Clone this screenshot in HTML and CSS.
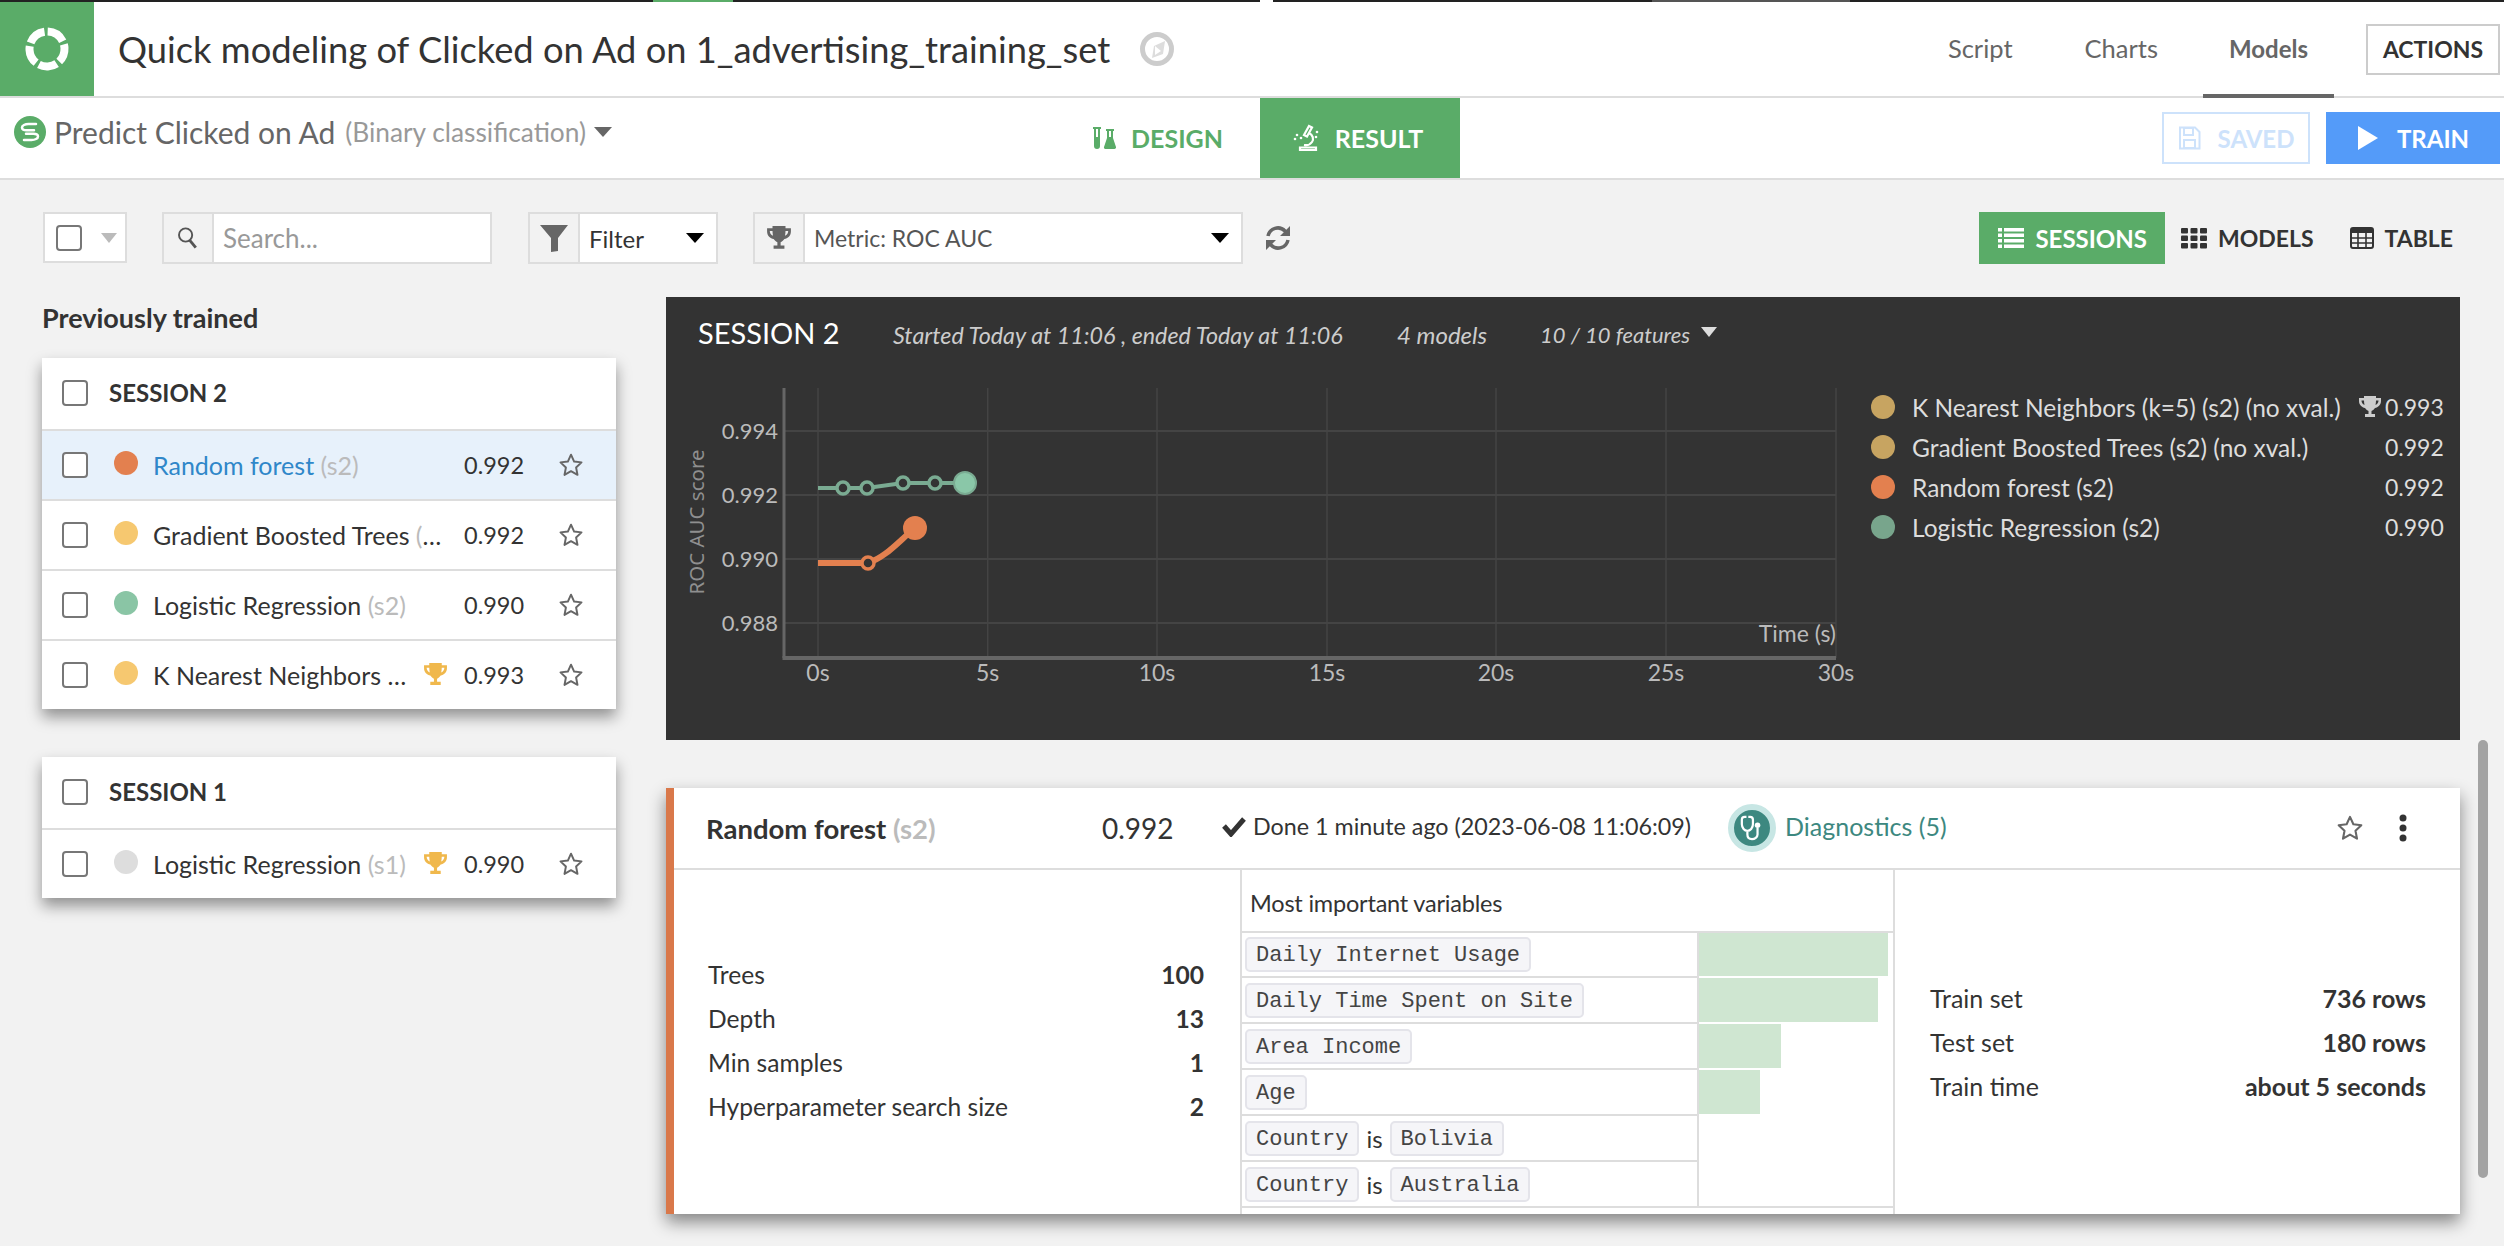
FILE: index.html
```html
<!DOCTYPE html>
<html lang="en">
<head>
    <meta charset="UTF-8">
    <title>Quick modeling of Clicked on Ad</title>
    <link rel="stylesheet" href="styles.css">
</head>
<body>
    <!-- Shared icons -->
    <svg class="sprite" width="0" height="0">
        <symbol id="star" viewBox="0 0 24 24"><path d="M12 2.500l2.900 6.300 6.800.8-5 4.700 1.300 6.800-6-3.400-6 3.400 1.300-6.800-5-4.700 6.800-.8z" fill="none" stroke="currentColor" stroke-width="1.800" stroke-linejoin="round"/></symbol>
        <symbol id="trophy" viewBox="0 0 24 24"><path d="M6 1h12v2h5v3c0 4-3 6.500-6 7-1 1.500-2.500 2.500-3.500 3v3H17v3H7v-3h3.500v-3c-1-.5-2.500-1.500-3.500-3-3-.5-6-3-6-7V3h5zM3.500 5.500c0 2 1.200 3.700 3 4.500-.3-1.400-.5-3-.5-4.500zm17 0H18c0 1.500-.2 3.100-.5 4.500 1.800-.8 3-2.500 3-4.500z" fill="currentColor"/></symbol>
    </svg>

    <div class="load-line">
        <span class="load-dark load-a"></span>
        <span class="load-green"></span>
        <span class="load-dark load-b"></span>
        <span class="load-white"></span>
        <span class="load-dark load-c"></span>
        <span class="load-grey"></span>
        <span class="load-dark load-d"></span>
    </div>

    <header class="top-bar">
        <div class="logo">
            <svg width="46" height="46" viewBox="0 0 46 46"><circle cx="23" cy="23" r="17.500" fill="none" stroke="#fff" stroke-width="8" pathLength="100" stroke-dasharray="17 3" stroke-dashoffset="-1.500" transform="rotate(-93 23 23)"/></svg>
        </div>
        <h1 class="page-title">Quick modeling of Clicked on Ad on 1_advertising_training_set</h1>
        <svg class="compass" width="36" height="36" viewBox="0 0 36 36"><circle cx="18" cy="18" r="14.500" fill="none" stroke="#ccc" stroke-width="5"/><path d="M26 10l-2 13-11 4 2-12z" fill="#ddd"/><path d="M16 15v9l6-4z" fill="#fff"/></svg>
        <nav class="top-tabs">
            <a class="top-tab">Script</a>
            <a class="top-tab">Charts</a>
            <a class="top-tab active">Models</a>
        </nav>
        <button class="actions-btn">ACTIONS</button>
    </header>

    <div class="sub-bar">
        <div class="task-name">
            <svg width="32" height="32" viewBox="0 0 32 32"><circle cx="16" cy="16" r="16" fill="#5aac68"/><path d="M22 8h-7.500c-3.500 0-6.500 1.500-6.500 3.500s2 2.800 4.500 2.800H20M10 24h7.500c3.500 0 6.500-1.500 6.500-3.500s-2-2.800-4.500-2.800H12" fill="none" stroke="#fff" stroke-width="2.500" stroke-linecap="round"/></svg>
            <span class="task-title">Predict Clicked on Ad</span>
            <span class="task-type">(Binary classification)</span>
            <span class="caret task-caret"></span>
        </div>
        <div class="mode-tabs">
            <a class="mode-tab">
                <svg width="24" height="24" viewBox="0 0 24 24"><path d="M1 1h8v2H8v17a3 3 0 0 1-6 0V3H1zM4 3v8h2V3z" fill="currentColor" fill-rule="evenodd"/><path d="M14 3h8v2h-1v7l3 9c.3 1-.5 2-1.500 2h-9c-1 0-1.800-1-1.500-2l3-9V5h-1zM17 5v6h2V5z" fill="currentColor" fill-rule="evenodd"/></svg>
                DESIGN
            </a>
            <a class="mode-tab active">
                <svg width="28" height="28" viewBox="0 0 28 28"><path d="M8 26h16v-2.500H8zM17 2l3 1.500-5 9-3-1.500zM17 9c4 2 5 6 3 9-2 3-5 3.500-8 3" fill="none" stroke="#fff" stroke-width="2.200"/><circle cx="5" cy="11" r="1.300" fill="#fff"/><circle cx="3" cy="15" r="1.300" fill="#fff"/><circle cx="9" cy="14" r="1.300" fill="#fff"/><circle cx="25" cy="8" r="1.300" fill="#fff"/><circle cx="24" cy="13" r="1.300" fill="#fff"/></svg>
                RESULT
            </a>
        </div>
        <div class="train-btns">
            <button class="saved-btn">
                <svg width="23" height="24" viewBox="0 0 23 24"><path d="M2 1.500h15l4.500 4.500v16.500H2z" fill="none" stroke="currentColor" stroke-width="2"/><path d="M6 2h9v7H6zM6 14h11v8H6z" fill="none" stroke="currentColor" stroke-width="2"/></svg>
                SAVED
            </button>
            <button class="train-btn">
                <svg width="22" height="24" viewBox="0 0 22 24"><path d="M1 0l20 12L1 24z" fill="#fff"/></svg>
                TRAIN
            </button>
        </div>
    </div>

    <div class="toolbar">
        <div class="check-drop">
            <span class="checkbox"></span>
            <span class="caret caret-pale"></span>
        </div>
        <div class="input-group search-group">
            <span class="group-icon">
                <svg width="24" height="24" viewBox="0 0 20 20"><circle cx="8" cy="7.500" r="5.500" fill="none" stroke="#555" stroke-width="1.600"/><path d="M11.500 12l5 6" stroke="#555" stroke-width="2.400"/></svg>
            </span>
            <span class="group-value placeholder">Search...</span>
        </div>
        <div class="input-group filter-group">
            <span class="group-icon">
                <svg width="30" height="30" viewBox="0 0 30 30"><path d="M1 2h28L19 15v13l-7 1V15z" fill="#666"/></svg>
            </span>
            <span class="group-value">Filter</span>
            <span class="caret caret-black"></span>
        </div>
        <div class="input-group metric-group">
            <span class="group-icon">
                <svg class="trophy-grey" width="26" height="26"><use href="#trophy"/></svg>
            </span>
            <span class="group-value metric-value">Metric: ROC AUC</span>
            <span class="caret caret-black"></span>
        </div>
        <svg class="refresh" width="28" height="28" viewBox="0 0 28 28"><path d="M4 12a10 10 0 0 1 17-5l3 3M24 16a10 10 0 0 1-17 5l-3-3" fill="none" stroke="#666" stroke-width="3.500"/><path d="M26 2v10H16zM2 26V16h10z" fill="#666"/></svg>
        <div class="view-switch">
            <a class="view-btn active">
                <svg width="26" height="22" viewBox="0 0 26 22"><path d="M0 1h4v3.500H0zM6 1h20v3.500H6zM0 6.500h4V10H0zM6 6.500h20V10H6zM0 12h4v3.500H0zM6 12h20v3.500H6zM0 17.500h4V21H0zM6 17.500h20V21H6z" fill="#fff"/></svg>
                SESSIONS
            </a>
            <a class="view-btn models-btn">
                <svg width="26" height="22" viewBox="0 0 26 22"><g fill="#333"><rect x="0" y="1" width="7" height="5.500" rx="1"/><rect x="9.500" y="1" width="7" height="5.500" rx="1"/><rect x="19" y="1" width="7" height="5.500" rx="1"/><rect x="0" y="8.500" width="7" height="5.500" rx="1"/><rect x="9.500" y="8.500" width="7" height="5.500" rx="1"/><rect x="19" y="8.500" width="7" height="5.500" rx="1"/><rect x="0" y="16" width="7" height="5.500" rx="1"/><rect x="9.500" y="16" width="7" height="5.500" rx="1"/><rect x="19" y="16" width="7" height="5.500" rx="1"/></g></svg>
                MODELS
            </a>
            <a class="view-btn">
                <svg width="24" height="22" viewBox="0 0 24 22"><rect x="1" y="1" width="22" height="20" rx="2" fill="none" stroke="#333" stroke-width="2"/><path d="M1 2h22v4H1z" fill="#333"/><path d="M8 6v15M16 6v15M1 11h22M1 16h22" stroke="#333" stroke-width="1.600"/></svg>
                TABLE
            </a>
        </div>
    </div>

    <main class="main">
        <aside class="sidebar">
            <h2 class="side-title">Previously trained</h2>

            <section class="session-card">
                <div class="session-head"><span class="checkbox"></span>SESSION 2</div>
                <div class="model-row selected">
                    <span class="checkbox"></span>
                    <span class="dot dot-orange"></span>
                    <span class="model-name">Random forest <em>(s2)</em></span>
                    <span class="model-score">0.992</span>
                    <svg class="star" width="26" height="26"><use href="#star"/></svg>
                </div>
                <div class="model-row">
                    <span class="checkbox"></span>
                    <span class="dot dot-yellow"></span>
                    <span class="model-name">Gradient Boosted Trees <em>(</em>…</span>
                    <span class="model-score">0.992</span>
                    <svg class="star" width="26" height="26"><use href="#star"/></svg>
                </div>
                <div class="model-row">
                    <span class="checkbox"></span>
                    <span class="dot dot-green"></span>
                    <span class="model-name">Logistic Regression <em>(s2)</em></span>
                    <span class="model-score">0.990</span>
                    <svg class="star" width="26" height="26"><use href="#star"/></svg>
                </div>
                <div class="model-row">
                    <span class="checkbox"></span>
                    <span class="dot dot-yellow"></span>
                    <span class="model-name">K Nearest Neighbors …</span>
                    <svg class="trophy-gold" width="25" height="25"><use href="#trophy"/></svg>
                    <span class="model-score">0.993</span>
                    <svg class="star" width="26" height="26"><use href="#star"/></svg>
                </div>
            </section>

            <section class="session-card">
                <div class="session-head"><span class="checkbox"></span>SESSION 1</div>
                <div class="model-row">
                    <span class="checkbox"></span>
                    <span class="dot dot-grey"></span>
                    <span class="model-name">Logistic Regression <em>(s1)</em></span>
                    <svg class="trophy-gold" width="25" height="25"><use href="#trophy"/></svg>
                    <span class="model-score">0.990</span>
                    <svg class="star" width="26" height="26"><use href="#star"/></svg>
                </div>
            </section>
        </aside>

        <div class="results">
            <section class="chart-panel">
                <div class="chart-head">
                    <span class="chart-title">SESSION 2</span>
                    <span class="chart-meta meta-time">Started Today at 11:06 , ended Today at 11:06</span>
                    <span class="chart-meta meta-models">4 models</span>
                    <span class="chart-meta meta-features">10 / 10 features</span>
                    <span class="caret caret-white"></span>
                </div>
                <div class="chart-body">
                    <svg class="chart" width="1200" height="373" viewBox="0 0 1200 373">
                        <g class="grid-h">
                            <path d="M118 64H1170M118 128H1170M118 192H1170M118 256H1170"/>
                        </g>
                        <g class="grid-v">
                            <path d="M152 21V291M321.700 21V291M491 21V291M661 21V291M830 21V291M1000 21V291M1170 21V291"/>
                        </g>
                        <path class="axis" d="M118 21V291" stroke-width="3"/>
                        <path class="axis" d="M116.500 291H1170" stroke-width="4"/>
                        <g class="y-labels">
                            <text x="112" y="72">0.994</text>
                            <text x="112" y="136">0.992</text>
                            <text x="112" y="200">0.990</text>
                            <text x="112" y="264">0.988</text>
                        </g>
                        <g class="x-labels">
                            <text x="152" y="314">0s</text>
                            <text x="321.700" y="314">5s</text>
                            <text x="491" y="314">10s</text>
                            <text x="661" y="314">15s</text>
                            <text x="830" y="314">20s</text>
                            <text x="1000" y="314">25s</text>
                            <text x="1170" y="314">30s</text>
                        </g>
                        <text class="y-title" transform="translate(38 155) rotate(-90)">ROC AUC score</text>
                        <text class="x-title" x="1170" y="275">Time (s)</text>

                        <path class="line-green" d="M152 121H201L237 116H299"/>
                        <g class="pt-green">
                            <circle cx="177" cy="121" r="6"/>
                            <circle cx="201" cy="121" r="6"/>
                            <circle cx="237" cy="116" r="6"/>
                            <circle cx="269" cy="116" r="6"/>
                        </g>
                        <circle cx="299" cy="116" r="11" fill="#8ac7a8" stroke="#7aab92" stroke-width="2"/>

                        <path class="line-orange" d="M152 196H202C220 190 232 175 249 161"/>
                        <circle class="pt-orange" cx="202" cy="196" r="6"/>
                        <circle cx="249" cy="161" r="12" fill="#e3804f"/>
                    </svg>
                    <ul class="legend">
                        <li class="legend-row"><span class="legend-dot tan"></span><span class="legend-name">K Nearest Neighbors (k=5) (s2) (no xval.)</span><svg class="trophy-pale" width="24" height="26"><use href="#trophy"/></svg><span class="legend-score">0.993</span></li>
                        <li class="legend-row"><span class="legend-dot tan"></span><span class="legend-name">Gradient Boosted Trees (s2) (no xval.)</span><span class="legend-score">0.992</span></li>
                        <li class="legend-row"><span class="legend-dot orange"></span><span class="legend-name">Random forest (s2)</span><span class="legend-score">0.992</span></li>
                        <li class="legend-row"><span class="legend-dot sage"></span><span class="legend-name">Logistic Regression (s2)</span><span class="legend-score">0.990</span></li>
                    </ul>
                </div>
            </section>

            <section class="detail-card">
                <div class="detail-head">
                    <span class="detail-name">Random forest <em>(s2)</em></span>
                    <span class="detail-score">0.992</span>
                    <span class="detail-done">
                        <svg width="24" height="22" viewBox="0 0 24 22"><path d="M2 11l7 8L22 4" fill="none" stroke="#333" stroke-width="5"/></svg>
                        Done 1 minute ago (2023-06-08 11:06:09)
                    </span>
                    <span class="diag-icon">
                        <svg width="26" height="30" viewBox="0 0 26 30"><path d="M7 3H5C3 3 2 4 2 6v5c0 4 3 7 6 7s6-3 6-7V6c0-2-1-3-3-3H9M8 18v4c0 3 2 5 5 5s6-2 6-5v-7" fill="none" stroke="#fff" stroke-width="2.400"/><circle cx="19" cy="12" r="3" fill="#fff"/></svg>
                    </span>
                    <span class="diag-text">Diagnostics (5)</span>
                    <svg class="star detail-star" width="28" height="28"><use href="#star"/></svg>
                    <svg class="kebab" width="8" height="28" viewBox="0 0 8 28"><circle cx="4" cy="4" r="3.500"/><circle cx="4" cy="14" r="3.500"/><circle cx="4" cy="24" r="3.500"/></svg>
                </div>
                <div class="detail-body">
                    <div class="detail-col params">
                        <div class="kv"><span>Trees</span><b>100</b></div>
                        <div class="kv"><span>Depth</span><b>13</b></div>
                        <div class="kv"><span>Min samples</span><b>1</b></div>
                        <div class="kv"><span>Hyperparameter search size</span><b>2</b></div>
                    </div>
                    <div class="detail-col variables">
                        <div class="var-title">Most important variables</div>
                        <div class="var-row"><div class="var-name"><code>Daily Internet Usage</code></div><div class="var-bar"><span style="width:189px"></span></div></div>
                        <div class="var-row"><div class="var-name"><code>Daily Time Spent on Site</code></div><div class="var-bar"><span style="width:179px"></span></div></div>
                        <div class="var-row"><div class="var-name"><code>Area Income</code></div><div class="var-bar"><span style="width:82px"></span></div></div>
                        <div class="var-row"><div class="var-name"><code>Age</code></div><div class="var-bar"><span style="width:61px"></span></div></div>
                        <div class="var-row"><div class="var-name"><code>Country</code> is <code>Bolivia</code></div><div class="var-bar"></div></div>
                        <div class="var-row"><div class="var-name"><code>Country</code> is <code>Australia</code></div><div class="var-bar"></div></div>
                        <div class="var-end"></div>
                    </div>
                    <div class="detail-col split">
                        <div class="kv"><span>Train set</span><b>736 rows</b></div>
                        <div class="kv"><span>Test set</span><b>180 rows</b></div>
                        <div class="kv"><span>Train time</span><b>about 5 seconds</b></div>
                    </div>
                </div>
            </section>
        </div>
    </main>

    <div class="scroll-thumb"></div>
</body>
</html>
```

FILE: styles.css
```css
* {
    margin: 0;
    padding: 0;
    box-sizing: border-box;
}

body {
    height: 1246px;
    overflow: hidden;
    background-color: #f2f2f2;
    color: #333;
    font-family: Lato, 'Noto Sans', sans-serif;
    font-size: 25px;
}

button {
    font-family: inherit;
    cursor: pointer;
}

em {
    font-style: normal;
    color: #bbb;
}

.sprite {
    position: absolute;
}

/* Thin load bar */
.load-line {
    display: flex;
    height: 2px;
}

.load-dark { background-color: #222; }
.load-a { width: 653px; }
.load-green { width: 80px; background-color: #5aac68; }
.load-b { width: 527px; }
.load-white { width: 13px; background-color: #fff; }
.load-c { width: 379px; }
.load-grey { width: 198px; background-color: #555; }
.load-d { flex: 1; }

/* Top bar */
.top-bar {
    display: flex;
    align-items: center;
    height: 96px;
    background-color: #fff;
    border-bottom: 2px solid #ddd;
    padding-right: 4px;
}

.logo {
    display: flex;
    align-items: center;
    justify-content: center;
    width: 94px;
    height: 94px;
    background-color: #5aac68;
}

.page-title {
    margin-left: 24px;
    font-size: 36.300px;
    font-weight: 400;
    white-space: nowrap;
}

.compass {
    margin-left: 29px;
}

.top-tabs {
    display: flex;
    align-self: stretch;
    margin-left: auto;
    margin-bottom: -2px;
}

.top-tab {
    display: flex;
    align-items: center;
    margin-left: 72px;
    border-bottom: 4px solid transparent;
    color: #666;
    font-size: 25.500px;
}

.top-tab.active {
    font-size: 24px;
    font-weight: 700;
    border-bottom-color: #666;
    padding: 0 26px;
    margin-left: 45px;
}

.actions-btn {
    width: 134px;
    height: 51px;
    margin-left: 32px;
    background-color: #fff;
    border: 2px solid #ccc;
    color: #333;
    font-size: 23px;
    font-weight: 700;
}

/* Second bar */
.sub-bar {
    display: grid;
    grid-template-columns: 1060px 400px 1fr;
    height: 82px;
    background-color: #fff;
    border-bottom: 2px solid #ddd;
    padding-right: 4px;
}

.task-name {
    display: flex;
    align-items: center;
    padding-left: 14px;
    padding-bottom: 12px;
}

.task-title {
    margin-left: 8px;
    font-size: 30px;
    color: #666;
}

.task-type {
    margin-left: 10px;
    font-size: 26.300px;
    color: #999;
}

.task-caret {
    margin-left: 8px;
}

.mode-tabs {
    display: grid;
    grid-template-columns: 200px 200px;
}

.mode-tab {
    display: flex;
    align-items: center;
    justify-content: center;
    gap: 15px;
    padding-right: 5px;
    color: #5aac68;
    font-size: 25px;
    font-weight: 700;
}

.mode-tab.active {
    background-color: #5aac68;
    color: #fff;
}

.train-btns {
    display: flex;
    justify-content: flex-end;
    gap: 16px;
    padding-top: 14px;
}

.saved-btn,
.train-btn {
    display: flex;
    align-items: center;
    justify-content: center;
    height: 52px;
    font-size: 24px;
    font-weight: 700;
}

.saved-btn {
    width: 148px;
    gap: 17px;
    background-color: #fff;
    border: 2px solid #cde2fb;
    color: #cde2fb;
}

.train-btn {
    width: 174px;
    gap: 18px;
    background-color: #549bf9;
    border: none;
    color: #fff;
}

/* Carets */
.caret {
    display: inline-block;
    width: 0;
    height: 0;
    border-left: 9px solid transparent;
    border-right: 9px solid transparent;
    border-top: 10px solid #666;
}

.caret-pale { border-top-color: #bbb; margin-left: 19px; border-left-width: 8px; border-right-width: 8px; }
.caret-black { border-top-color: #000; }
.caret-white { border-top-color: #ddd; border-left-width: 8px; border-right-width: 8px; margin-left: 11px; }

/* Toolbar */
.toolbar {
    display: flex;
    align-items: flex-start;
    height: 84px;
    padding: 32px 33px 0 43px;
}

.checkbox {
    flex: none;
    display: inline-block;
    width: 26px;
    height: 26px;
    background-color: #fff;
    border: 2px solid #777;
    border-radius: 4px;
}

.check-drop {
    display: flex;
    align-items: center;
    width: 84px;
    height: 51px;
    padding-left: 11px;
    background-color: #fff;
    border: 2px solid #ddd;
}

.input-group {
    display: flex;
    align-items: center;
    height: 52px;
    background-color: #fff;
    border: 2px solid #ddd;
}

.group-icon {
    display: flex;
    align-items: center;
    justify-content: center;
    align-self: stretch;
    width: 50px;
    background-color: #f2f2f2;
    border-right: 2px solid #ddd;
}

.group-value {
    flex: 1;
    padding-left: 9px;
    font-size: 24px;
}

.placeholder {
    color: #999;
    font-size: 26px;
}

.metric-value {
    color: #555;
    font-size: 23px;
}

.search-group { width: 330px; margin-left: 35px; }
.filter-group { width: 190px; margin-left: 36px; padding-right: 12px; }
.metric-group { width: 490px; margin-left: 35px; padding-right: 12px; }

.trophy-grey { color: #666; }

.refresh {
    margin: 12px 0 0 21px;
}

.view-switch {
    display: flex;
    margin-left: auto;
}

.view-btn {
    display: flex;
    align-items: center;
    gap: 11px;
    height: 52px;
    padding: 0 18px;
    font-size: 23px;
    font-weight: 700;
    color: #333;
}

.view-btn.active {
    background-color: #5aac68;
    color: #fff;
    font-size: 24px;
    padding: 0 18px 0 19px;
}

.models-btn {
    padding-left: 16px;
}

/* Main area */
.main {
    display: flex;
    padding-left: 42px;
}

.sidebar {
    width: 574px;
    flex: none;
    padding-top: 33px;
}

.side-title {
    height: 42px;
    line-height: 42px;
    margin-bottom: 19px;
    font-size: 27px;
    font-weight: 700;
}

.session-card {
    margin-bottom: 48px;
    background-color: #fff;
    box-shadow: 0 8px 14px rgba(0, 0, 0, 0.4);
}

.session-head {
    display: flex;
    align-items: center;
    gap: 21px;
    height: 73px;
    padding: 0 0 2px 20px;
    border-bottom: 2px solid #ddd;
    font-size: 24px;
    font-weight: 700;
}

.model-row {
    display: flex;
    align-items: center;
    height: 70px;
    padding: 0 32px 1px 20px;
    border-bottom: 2px solid #ddd;
    font-size: 25px;
}

.model-row:last-child {
    height: 68px;
    border-bottom: none;
}

.model-row.selected {
    background-color: #e7f1fb;
    color: #2f87c9;
}

.dot {
    flex: none;
    width: 24px;
    height: 24px;
    margin: -4px 15px 0 26px;
    border-radius: 50%;
}

.dot-orange { background-color: #e3804f; }
.dot-yellow { background-color: #f6c870; }
.dot-green { background-color: #8ac5a5; }
.dot-grey { background-color: #ddd; }

.model-name {
    flex: 1;
    min-width: 0;
    white-space: nowrap;
}

.trophy-gold {
    flex: none;
    margin-left: 16px;
    color: #f0b84c;
}

.model-score {
    flex: none;
    width: 58px;
    margin-left: 16px;
    color: #333;
    font-size: 23.500px;
}

.star {
    flex: none;
    margin-left: 36px;
    color: #666;
}

.results {
    flex: none;
    width: 1794px;
    margin-left: 50px;
    padding-top: 33px;
}

/* Dark chart panel */
.chart-panel {
    height: 443px;
    background-color: #333;
    color: #ddd;
}

.chart-head {
    display: flex;
    align-items: center;
    height: 70px;
    padding-left: 32px;
}

.chart-title {
    width: 195px;
    font-size: 29px;
    color: #fff;
}

.chart-meta {
    font-style: italic;
    color: #ccc;
    padding-top: 5px;
}

.meta-time { width: 504px; font-size: 23.300px; }
.meta-models { width: 143px; font-size: 24px; }
.meta-features { font-size: 22px; }

.chart-body {
    display: flex;
}

.grid-h path {
    fill: none;
    stroke: #444;
    stroke-width: 2;
}

.grid-v path {
    fill: none;
    stroke: #444;
    stroke-width: 1.500;
}

.axis {
    fill: none;
    stroke: #666;
}

.y-labels text {
    fill: #bbb;
    font-size: 22px;
    text-anchor: end;
}

.x-labels text {
    fill: #bbb;
    font-size: 23px;
    text-anchor: middle;
}

.y-title {
    fill: #8f8f8f;
    font-family: 'Noto Sans', sans-serif;
    font-size: 20.500px;
    text-anchor: middle;
}

.x-title {
    fill: #bbb;
    font-size: 23px;
    text-anchor: end;
}

.line-green {
    fill: none;
    stroke: #7aab92;
    stroke-width: 4;
}

.pt-green circle {
    fill: #333;
    stroke: #7aab92;
    stroke-width: 3.500;
}

.line-orange {
    fill: none;
    stroke: #e3804f;
    stroke-width: 6;
}

.pt-orange {
    fill: #333;
    stroke: #e3804f;
    stroke-width: 3.500;
}

.legend {
    flex: 1;
    list-style: none;
    padding: 20px 17px 0 5px;
}

.legend-row {
    display: flex;
    align-items: center;
    height: 40px;
    font-size: 24.500px;
}

.legend-dot {
    flex: none;
    width: 24px;
    height: 24px;
    margin-right: 17px;
    border-radius: 50%;
}

.tan { background-color: #c7a461; }
.orange { background-color: #e3804f; }
.sage { background-color: #78a58c; }

.legend-name {
    flex: 1;
    white-space: nowrap;
}

.trophy-pale {
    color: #ccc;
    margin-right: 3px;
}

.legend-score {
    width: 58px;
    font-size: 23px;
    text-align: right;
}

/* Model detail */
.detail-card {
    height: 426px;
    margin-top: 48px;
    overflow: hidden;
    background-color: #fff;
    border-left: 8px solid #d9784a;
    box-shadow: 0 8px 16px rgba(0, 0, 0, 0.45);
}

.detail-head {
    display: flex;
    align-items: center;
    height: 82px;
    padding-left: 32px;
    border-bottom: 2px solid #ddd;
}

.detail-name {
    width: 396px;
    font-size: 27.500px;
    font-weight: 700;
    white-space: nowrap;
}

.detail-score {
    width: 120px;
    font-size: 28px;
}

.detail-done {
    display: flex;
    align-items: center;
    gap: 7px;
    width: 506px;
    padding-bottom: 4px;
    font-size: 23.300px;
}

.diag-icon {
    display: flex;
    align-items: center;
    justify-content: center;
    flex: none;
    width: 48px;
    height: 48px;
    margin-right: 9px;
    background-color: #3d8880;
    border: 6px solid #c7e6e4;
    border-radius: 50%;
}

.diag-icon svg {
    width: 24px;
    height: 28px;
}

.diag-text {
    flex: 1;
    padding-bottom: 4px;
    color: #3d8880;
    font-size: 25px;
}

.detail-star {
    margin-left: 0;
}

.kebab {
    margin: 0 53px 0 35px;
    fill: #333;
}

.detail-body {
    display: flex;
    height: 344px;
}

.detail-col {
    flex: none;
}

.params {
    width: 566px;
    padding: 0 36px 0 34px;
    align-self: center;
    font-size: 24.600px;
    margin-top: -3px;
}

.kv {
    display: flex;
    justify-content: space-between;
    align-items: center;
    height: 44px;
}

.kv b {
    font-weight: 700;
}

.variables {
    width: 655px;
    border-left: 2px solid #ddd;
    border-right: 2px solid #ddd;
}

.var-title {
    height: 63px;
    line-height: 66px;
    padding-left: 8px;
    border-bottom: 2px solid #ddd;
    font-size: 23.500px;
    letter-spacing: -0.2px;
}

.var-row {
    display: flex;
    height: 46px;
}

.var-row:nth-child(2) {
    height: 45px;
}

.var-name {
    display: flex;
    align-items: center;
    gap: 7px;
    width: 457px;
    padding-left: 3px;
    border-right: 2px solid #ddd;
    border-bottom: 2px solid #ddd;
    font-size: 24px;
}

code {
    padding: 2px 9px;
    height: 35px;
    line-height: 29px;
    background-color: #f5f5f8;
    border: 2px solid #e4e4ea;
    border-radius: 5px;
    color: #444;
    font-family: 'Liberation Mono', monospace;
    font-size: 22px;
}

.var-bar {
    flex: 1;
    display: flex;
    padding-bottom: 2px;
}

.var-bar span {
    display: block;
    background-color: #cfe6d1;
}

.var-end {
    height: 2px;
    margin-top: -2px;
    background-color: #ddd;
}

.split {
    flex: 1;
    padding: 0 34px 0 35px;
    align-self: center;
    font-size: 25px;
}

.scroll-thumb {
    position: absolute;
    top: 740px;
    left: 2478px;
    width: 10px;
    height: 438px;
    background-color: #a3a3a3;
    border-radius: 5px;
}
```
